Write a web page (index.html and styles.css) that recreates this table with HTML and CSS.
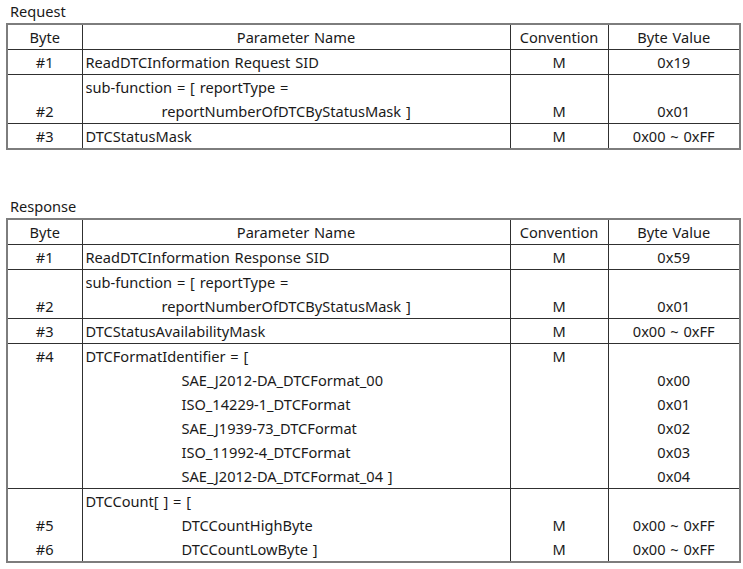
FILE: index.html
```html
<!DOCTYPE html>
<html>
<head>
<meta charset="utf-8">
<link rel="stylesheet" href="styles.css">
</head>
<body>
<div class="page">
  <div class="section-title">Request</div>
  <table class="spec">
    <colgroup>
      <col class="col-byte"><col class="col-name"><col class="col-conv"><col class="col-val">
    </colgroup>
    <tr class="head"><th>Byte</th><th>Parameter Name</th><th>Convention</th><th>Byte Value</th></tr>
    <tr><td class="c">#1</td><td>ReadDTCInformation Request SID</td><td class="c">M</td><td class="c">0x19</td></tr>
    <tr class="vb"><td class="c">#2</td><td><div>sub-function = [ reportType =</div><div class="ind1">reportNumberOfDTCByStatusMask ]</div></td><td class="c">M</td><td class="c">0x01</td></tr>
    <tr><td class="c">#3</td><td>DTCStatusMask</td><td class="c">M</td><td class="c">0x00 ~ 0xFF</td></tr>
  </table>

  <div class="section-title second">Response</div>
  <table class="spec">
    <colgroup>
      <col class="col-byte"><col class="col-name"><col class="col-conv"><col class="col-val">
    </colgroup>
    <tr class="head"><th>Byte</th><th>Parameter Name</th><th>Convention</th><th>Byte Value</th></tr>
    <tr><td class="c">#1</td><td>ReadDTCInformation Response SID</td><td class="c">M</td><td class="c">0x59</td></tr>
    <tr class="vb"><td class="c">#2</td><td><div>sub-function = [ reportType =</div><div class="ind1">reportNumberOfDTCByStatusMask ]</div></td><td class="c">M</td><td class="c">0x01</td></tr>
    <tr><td class="c">#3</td><td>DTCStatusAvailabilityMask</td><td class="c">M</td><td class="c">0x00 ~ 0xFF</td></tr>
    <tr class="vt">
      <td class="c">#4</td>
      <td>
        <div>DTCFormatIdentifier = [</div>
        <div class="ind2">SAE_J2012-DA_DTCFormat_00</div>
        <div class="ind2">ISO_14229-1_DTCFormat</div>
        <div class="ind2">SAE_J1939-73_DTCFormat</div>
        <div class="ind2">ISO_11992-4_DTCFormat</div>
        <div class="ind2">SAE_J2012-DA_DTCFormat_04 ]</div>
      </td>
      <td class="c">M</td>
      <td class="c vbot"><div>0x00</div><div>0x01</div><div>0x02</div><div>0x03</div><div>0x04</div></td>
    </tr>
    <tr class="vb">
      <td class="c"><div>#5</div><div>#6</div></td>
      <td>
        <div>DTCCount[ ] = [</div>
        <div class="ind2">DTCCountHighByte</div>
        <div class="ind2">DTCCountLowByte ]</div>
      </td>
      <td class="c"><div>M</div><div>M</div></td>
      <td class="c"><div>0x00 ~ 0xFF</div><div>0x00 ~ 0xFF</div></td>
    </tr>
  </table>
</div>
</body>
</html>
```

FILE: styles.css
```css
html, body {
  margin: 0;
  padding: 0;
  background: #ffffff;
}
body {
  font-family: "Noto Sans", "Open Sans", sans-serif;
  font-size: 14.6px;
  word-spacing: 1px;
  color: #1a1a1a;
}
.page {
  padding-left: 6px;
}
.section-title {
  padding-left: 4px;
  line-height: 23px;
  height: 23px;
}
.section-title.second {
  margin-top: 45px;
}
.spec {
  border-collapse: collapse;
  table-layout: fixed;
  width: 733px;
  border: 2px solid #7d7d7d;
}
.col-byte { width: 75px; }
.col-name { width: 428px; }
.col-conv { width: 98px; }
.col-val { width: 132px; }
.spec th, .spec td {
  border: 1px solid #303030;
  padding: 0 3px;
  line-height: 24px;
  font-weight: normal;
  vertical-align: middle;
  white-space: nowrap;
}
.spec th { text-align: center; }
.spec td.c { text-align: center; }
.spec tr.vb td { vertical-align: bottom; }
.spec tr.vt td { vertical-align: top; }
.spec tr.vt td.vbot { vertical-align: bottom; }
.ind1 { padding-left: 76px; }
.ind2 { padding-left: 96px; }
```
